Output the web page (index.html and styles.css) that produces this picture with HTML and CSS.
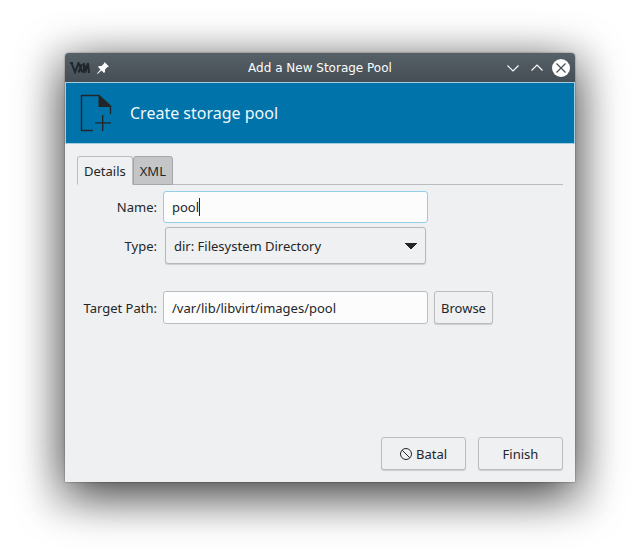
FILE: index.html
```html
<!DOCTYPE html>
<html lang="id">
<head>
<meta charset="utf-8">
<title>Add a New Storage Pool</title>
<link rel="stylesheet" href="styles.css">
</head>
<body>
<main class="window">
  <header class="titlebar">
    <div class="titlebar-side">
      <svg width="20" height="12" viewBox="0 0 20 12" aria-hidden="true"><path d="M0 1h3M1.500 1L5 10 8.500 1 12.500 10.500M8.500 10.500L12 2M14 1v10M14 2l2 6 2-7 1 10" fill="none" stroke="#20272c" stroke-width="2"/></svg>
      <button class="icon-button" type="button" aria-label="Pin">
        <svg width="14" height="14" viewBox="0 0 14 14"><path d="M8.500 1L13 5.500l-1.500.500-2.500 2.500v2.500l-1 1-2.500-2.500L1.500 13 1 12.500 4.500 8.500 2 6l1-1h2.500L8 2.500z" fill="#fcfcfc"/></svg>
      </button>
    </div>
    <h1 class="title">Add a New Storage Pool</h1>
    <div class="titlebar-side titlebar-actions">
      <button class="icon-button" type="button" aria-label="Minimize">
        <svg width="18" height="18" viewBox="0 0 18 18"><path d="M3.500 6.500L9 12l5.500-5.500" fill="none" stroke="#fcfcfc" stroke-width="1.200"/></svg>
      </button>
      <button class="icon-button" type="button" aria-label="Maximize">
        <svg width="18" height="18" viewBox="0 0 18 18"><path d="M3.500 11.500L9 6l5.500 5.500" fill="none" stroke="#fcfcfc" stroke-width="1.200"/></svg>
      </button>
      <button class="icon-button" type="button" aria-label="Close">
        <svg width="18" height="18" viewBox="0 0 18 18"><circle cx="9" cy="9" r="9" fill="#fcfcfc"/><path d="M4.500 4.500l9 9M13.500 4.500l-9 9" stroke="#475057" stroke-width="1.200"/></svg>
      </button>
    </div>
  </header>

  <div class="banner">
    <svg width="34" height="38" viewBox="0 0 34 38" aria-hidden="true">
      <path d="M14 36.500H2.500v-35H20L31.500 12v8" fill="none" stroke="#232629" stroke-width="1.400"/>
      <path d="M19.500 1L32 13H19.500zM23 21h1.400v16H23zM16 28.200h16v1.400H16z" fill="#232629"/>
    </svg>
    <h2 class="banner-title">Create storage pool</h2>
  </div>

  <div class="content">
    <div class="tabs" role="tablist">
      <button class="tab tab-active" type="button" role="tab" aria-selected="true">Details</button>
      <button class="tab" type="button" role="tab" aria-selected="false">XML</button>
    </div>

    <form class="form">
      <label for="name">Name:</label>
      <input class="field field-focus" id="name" type="text" value="pool">

      <label class="row-type" for="type">Type:</label>
      <select class="type-select row-type" id="type"><option>dir: Filesystem Directory</option></select>

      <label class="row-path" for="path">Target Path:</label>
      <input class="field row-path" id="path" type="text" value="/var/lib/libvirt/images/pool">
      <button class="button row-path" type="button">Browse</button>
    </form>

    <footer class="actions">
      <button class="button button-wide" type="button">
        <svg width="12" height="12" viewBox="0 0 12 12" aria-hidden="true"><circle cx="6" cy="6" r="5.500" fill="none" stroke="#232629"/><path d="M2.200 2.200l7.600 7.600" stroke="#232629"/></svg>
        Batal
      </button>
      <button class="button button-wide" type="button">Finish</button>
    </footer>
  </div>
</main>
</body>
</html>
```
FILE: styles.css
```css
* { box-sizing: border-box; }

body {
  display: flex;
  min-height: 100vh;
  margin: 0;
  padding: 53px 65px 77px;
  background: #fff;
  color: #232629;
  font: 13px/18px "Noto Sans", sans-serif;
}

button, input, select {
  margin: 0;
  color: inherit;
  font: inherit;
}

.window {
  display: flex;
  flex: 1;
  flex-direction: column;
  min-width: 0;
  border-radius: 4px 4px 0 0;
  background: #eff0f1;
  box-shadow:
    0 12px 48px rgba(0, 0, 0, .8),
    0 12px 24px 24px rgba(0, 0, 0, .04),
    0 0 2px rgba(0, 0, 0, .5);
}

.titlebar {
  display: grid;
  grid-template-columns: 1fr auto 1fr;
  align-items: center;
  height: 29px;
  padding: 0 5px;
  border-radius: 4px 4px 0 0;
  background: linear-gradient(#566067, #454e54);
  color: #fcfcfc;
}

.titlebar-side {
  display: flex;
  align-items: center;
  gap: 6px;
}

.titlebar-actions { justify-content: flex-end; }

.title {
  margin: 0;
  font: 12px/18px "DejaVu Sans", sans-serif;
}

.icon-button {
  display: flex;
  padding: 0;
  border: 0;
  background: none;
}

.banner {
  display: flex;
  align-items: center;
  gap: 17px;
  height: 62px;
  padding: 0 13px;
  border: 1px solid #a5cde2;
  background: #0073aa;
}

.banner-title {
  margin: 0;
  color: #eff8fc;
  font-size: 16px;
  line-height: 24px;
  font-weight: 400;
}

.content {
  display: flex;
  flex: 1;
  flex-direction: column;
  padding: 12px;
}

.tabs {
  display: flex;
  height: 29px;
  background: linear-gradient(#b9bbbd, #b9bbbd) bottom / 100% 1px no-repeat;
}

.tab {
  padding: 0 6px;
  border: 1px solid #a4a6a8;
  border-radius: 3px 3px 0 0;
  background: #c3c5c6;
}

.tab-active {
  border-color: #bbbdbf;
  border-bottom-color: #eff0f1;
  background: #eff0f1;
}

.form {
  display: grid;
  grid-template-columns: 80px minmax(0, 265px) auto;
  justify-content: start;
  align-items: center;
  column-gap: 6px;
  padding-top: 6px;
}

.form label {
  grid-column: 1;
  text-align: right;
  white-space: nowrap;
}

.row-type { margin-top: 4px; }
.row-path { margin-top: 27px; }

.field {
  width: 100%;
  height: 33px;
  padding: 0 8px;
  border: 1px solid #bbbdbf;
  border-radius: 3px;
  outline: 0;
  background: #fcfcfc;
}

/* The text cursor stands after the typed name. */
.field-focus {
  height: 32px;
  border-color: #93cee9;
  background: linear-gradient(#232629, #232629) 35px 50% / 1px 18px no-repeat #fcfcfc;
}

.type-select {
  height: 37px;
  margin-right: 2px;
  margin-left: 2px;
  padding: 0 8px;
  appearance: none;
  border: 1px solid #b5b7b9;
  border-radius: 3px;
  background-color: #eff0f1;
  background-image:
    linear-gradient(to bottom left, #232629 50%, transparent 52%),
    linear-gradient(to bottom right, #232629 50%, transparent 52%);
  background-position: right 14px center, right 8px center;
  background-size: 6px 6px;
  background-repeat: no-repeat;
  box-shadow: 0 1px 1px rgba(0, 0, 0, .15);
}

.button {
  display: flex;
  align-items: center;
  justify-content: center;
  gap: 4px;
  height: 33px;
  padding: 0 6px;
  border: 1px solid #bbbdbf;
  border-radius: 3px;
  background: #eff0f1;
  box-shadow: 0 1px 1px rgba(0, 0, 0, .15);
}

.button-wide { width: 85px; }

.actions {
  display: flex;
  justify-content: flex-end;
  gap: 12px;
  margin-top: auto;
}
```
